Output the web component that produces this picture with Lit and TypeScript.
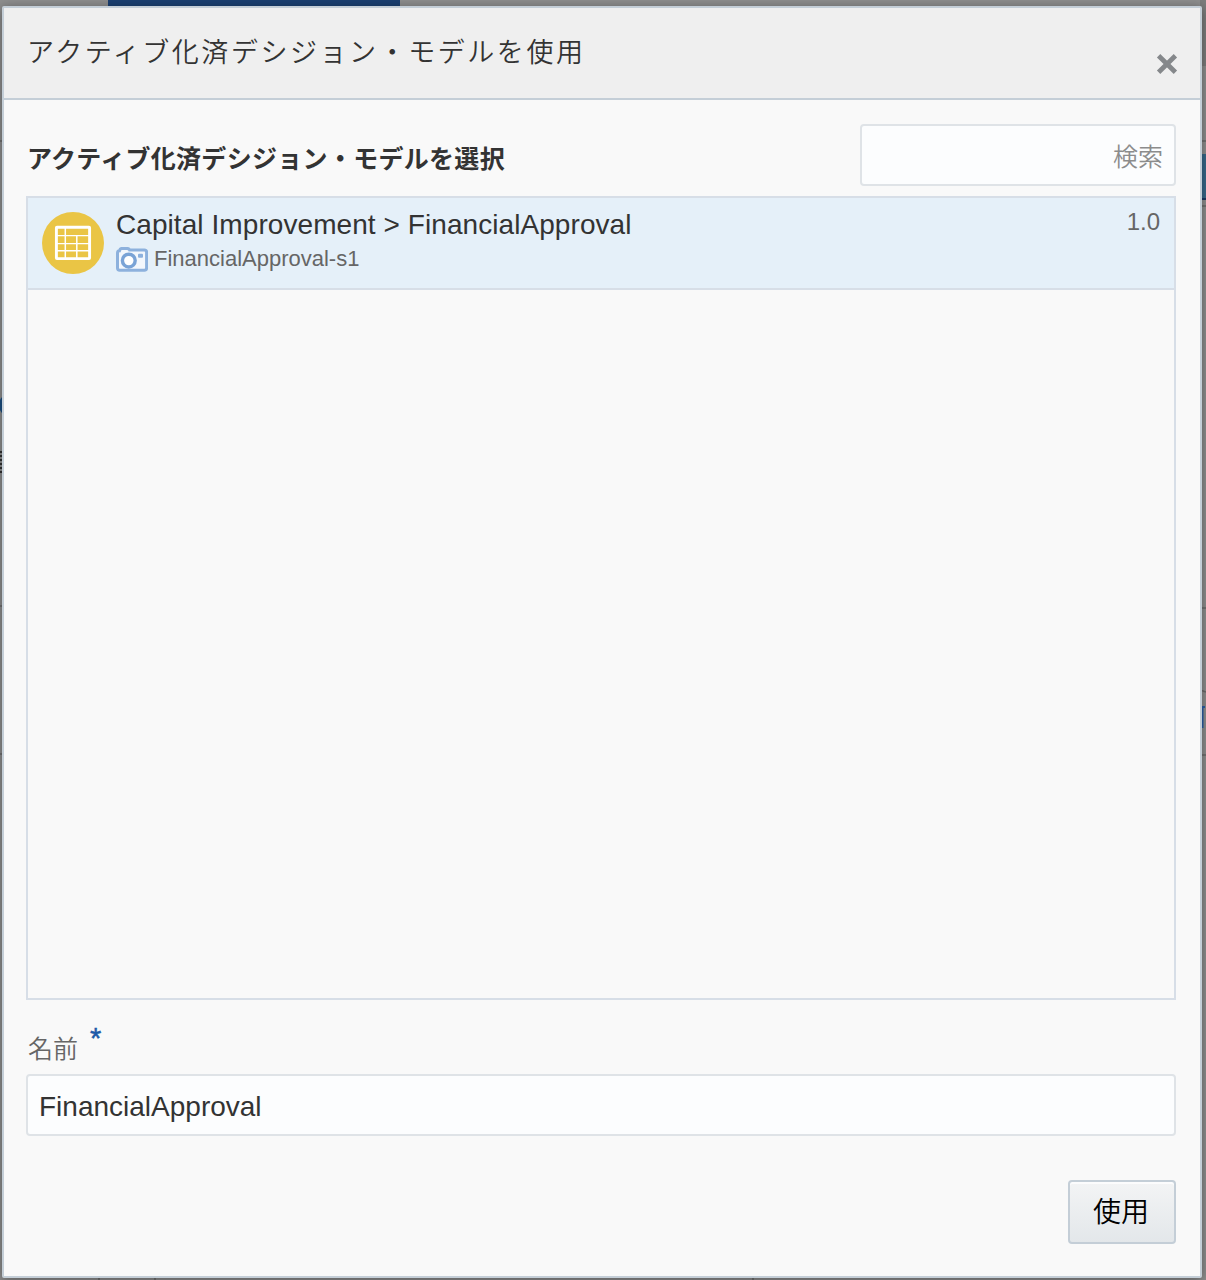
import { LitElement, html, css, svg } from "lit";
import { customElement, property, state } from "lit/decorators.js";

const tableIcon = svg`
  <circle cx="31" cy="31" r="31" fill="#eac545"></circle>
  <rect x="14.4" y="15.2" width="33.2" height="31.4" rx="0.6" fill="none" stroke="#fff" stroke-width="2.9"></rect>
  <path d="M23.3 16v30M34.8 24v22" stroke="#fff" stroke-width="1.5"></path>
  <path d="M14 23.6h33M14 31.6h33M14 38.8h33" stroke="#fff" stroke-width="1.4"></path>`;

const cameraIcon = svg`
  <path d="M3.5 3.7Q4 1.4 6 1.4h5q2 0 2.6 1.6h14.8q2.2 0 2.2 2.2v15.8q0 2.2-2.2 2.2H3.7q-2.2 0-2.2-2.2V6q0-2.2 2-2.3Z" fill="#f3f7fc" stroke="#8db1dd" stroke-width="3"></path>
  <circle cx="12.8" cy="13.6" r="6.4" fill="#fff" stroke="#7aa3d6" stroke-width="3.4"></circle>
  <rect x="22" y="6.8" width="5" height="4" rx="1" fill="#8db1dd"></rect>`;

interface DecisionModel {
  path: string;
  snapshot: string;
  version: string;
}

@customElement("model-row")
export class ModelRow extends LitElement {
  static styles = css`
    :host { display: block; }
    .row {
      box-sizing: border-box; display: flex; height: 92px; padding: 14px 14px 0;
      background: #e5f0f9; border-bottom: 2px solid #d7dee7;
    }
    .badge { flex: none; width: 62px; height: 62px; display: block; }
    .text { flex: 1; margin-left: 12px; }
    .name { height: 34px; margin-top: -5px; font-size: 28px; line-height: 36px; color: #333; white-space: nowrap; letter-spacing: 0.07px; }
    .snap { display: flex; align-items: center; height: 36px; font-size: 22px; line-height: 36px; color: #666; }
    .camera { width: 32px; height: 25px; margin-right: 6px; display: block; filter: blur(0.5px); }
    .version { font-size: 24px; line-height: 28px; margin-top: -4px; color: #666; }
  `;
  @property({ attribute: false }) model!: DecisionModel;
  render() {
    return html`<div class="row">
      <svg class="badge" viewBox="0 0 62 62">${tableIcon}</svg>
      <div class="text">
        <div class="name">${this.model.path}</div>
        <div class="snap"><svg class="camera" viewBox="0 0 32 25">${cameraIcon}</svg><span>${this.model.snapshot}</span></div>
      </div>
      <div class="version">${this.model.version}</div>
    </div>`;
  }
}

@customElement("app-root")
export class AppRoot extends LitElement {
  static styles = css`
    :host {
      display: block; height: 1280px; overflow: hidden; position: relative;
      font-family: "Liberation Sans", "Noto Sans CJK JP", sans-serif; background: #8e8e8e;
    }
    .backdrop { position: absolute; inset: 0; width: 1206px; height: 1280px; }
    .dialog {
      position: relative; box-sizing: border-box; width: 1200px; height: 1272px; margin-left: 2px;
      display: flex; flex-direction: column; background: #f9f9f9;
      border: 2px solid #c4ced7; border-radius: 2px; box-shadow: 0 2px 12px rgba(0, 0, 0, 0.4);
    }
    .page { padding-top: 6px; }
    .header {
      box-sizing: border-box; height: 92px; flex: none; display: flex; justify-content: space-between;
      padding: 24px 22px 0 23px; background: #efefef; border-bottom: 2px solid #c4ced7;
    }
    .title { margin: 0; font-size: 27px; font-weight: 350; line-height: 42px; letter-spacing: 2.55px; color: #333; }
    .close { width: 22px; height: 22px; margin-top: 21px; padding: 0; border: 0; background: none; }
    .close svg { display: block; }
    .body { flex: 1; display: flex; flex-direction: column; padding: 24px 24px 32px 22px; }
    .bar { display: flex; justify-content: space-between; height: 72px; }
    .heading { margin: 16px 0 0 1px; font-size: 25px; line-height: 38px; font-weight: 700; letter-spacing: 0.3px; color: #333; }
    .field {
      box-sizing: border-box; height: 62px; border: 2px solid #dfe3e7; border-radius: 4px;
      background: #fcfdfe; color: #333; font: 28px "Liberation Sans", "Noto Sans CJK JP", sans-serif; outline: none;
    }
    .search { width: 316px; padding: 4px 11px 0; font-size: 25px; font-weight: 350; text-align: right; }
    .search::placeholder { color: #8c8c8c; opacity: 1; }
    .list { box-sizing: border-box; height: 804px; border: 2px solid #d7dee7; }
    .label { display: flex; height: 74px; padding: 29px 0 0 2px; box-sizing: border-box; font-size: 25px; font-weight: 350; line-height: 40px; color: #666; }
    .star { margin-left: 12px; font-size: 29px; line-height: 18px; color: #1c5aa8; -webkit-text-stroke: 0.5px #1c5aa8; }
    .name-field { width: 100%; padding: 3px 11px 0; }
    .footer { display: flex; justify-content: flex-end; padding-top: 44px; }
    .use {
      width: 108px; height: 64px; padding: 0 2px 4px 0; border: 2px solid #c4ced7; border-radius: 4px;
      background: linear-gradient(#f3f4f5, #e3e7ea); box-shadow: inset 0 2px 0 #fcfcfd;
      color: #000; font: 28px "Liberation Sans", "Noto Sans CJK JP", sans-serif; font-weight: 350;
    }
  `;

  @state() private name = "FinancialApproval";
  private models: DecisionModel[] = [
    { path: "Capital Improvement > FinancialApproval", snapshot: "FinancialApproval-s1", version: "1.0" },
  ];

  render() {
    return html`<svg class="backdrop" viewBox="0 0 1206 1280">
        <path fill="#1b4072" d="M108 0h292v8H108z"></path>
        <circle cx="11" cy="405" r="12" fill="#1b4f82"></circle>
        <path d="M0 452h2M0 456h3M0 460h2M0 464h3M0 468h2M0 472h2" stroke="#333" stroke-width="2"></path>
        <path fill="#7d7d7d" d="M1200 0h6v66h-6z"></path>
        <path fill="#38688a" d="M1200 154h6v45h-6z"></path>
        <path fill="#1c3863" d="M1200 198h6v2h-6z"></path>
        <path d="M1200 141h6M1200 206h6M1200 608h6M1200 690l6 2M1200 755h6M0 141h3M0 606h3M0 754h3M99 1276v4M155 1276v4M753 1276v4" stroke="#6b6b6b" stroke-width="1.5"></path>
        <path d="M1201 707h4M1202.5 706v22" stroke="#2c5fa8" stroke-width="2"></path>
      </svg>
      <div class="page"><div class="dialog" role="dialog">
        <div class="header">
          <h1 class="title">アクティブ化済デシジョン・モデルを使用</h1>
          <button class="close"><svg width="22" height="22" viewBox="0 0 22 22"><path d="M2.6 2.8l16.8 16.4M19.4 2.8L2.6 19.2" stroke="#85888b" stroke-width="4.8"></path></svg></button>
        </div>
        <div class="body">
          <div class="bar">
            <h2 class="heading">アクティブ化済デシジョン・モデルを選択</h2>
            <input class="field search" placeholder="検索" />
          </div>
          <div class="list">${this.models.map((m) => html`<model-row .model=${m}></model-row>`)}</div>
          <label class="label"><span>名前</span><span class="star">*</span></label>
          <input class="field name-field" .value=${this.name}
            @input=${(e: Event) => (this.name = (e.target as HTMLInputElement).value)} />
          <div class="footer"><button class="use">使用</button></div>
        </div>
      </div></div>`;
  }
}
